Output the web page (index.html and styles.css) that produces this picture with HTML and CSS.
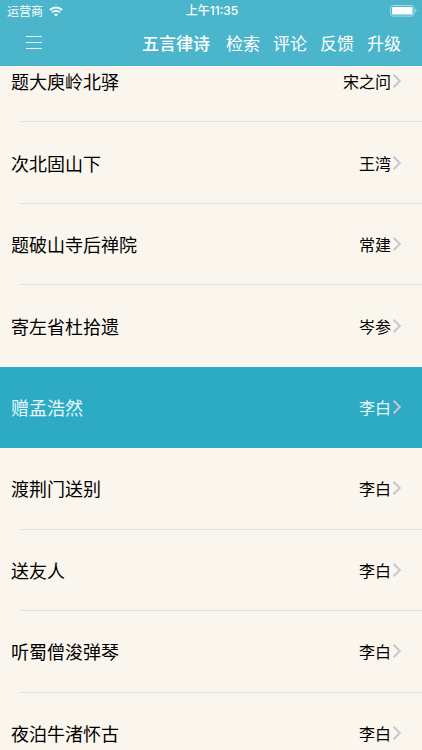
FILE: index.html
```html
<!DOCTYPE html>
<html lang="zh-CN">
<head>
  <meta charset="UTF-8">
  <meta name="viewport" content="width=device-width, initial-scale=1.0">
  <title>五言律诗</title>
  <link rel="stylesheet" href="styles.css">
</head>
<body>

<header class="header">
  <!-- Status bar -->
  <div class="status-bar">
    <div class="carrier">
      <span>运营商</span>
      <svg class="wifi" viewBox="0 0 14 11" width="14" height="11" aria-hidden="true">
        <path d="M0.9 4 A8.7 8.7 0 0 1 13.1 4" fill="none" stroke="#fff" stroke-width="2"/>
        <path d="M3.1 6.4 A5.6 5.6 0 0 1 10.9 6.4" fill="none" stroke="#fff" stroke-width="1.8"/>
        <path d="M7 10.6 L4.9 8.5 A3 3 0 0 1 9.1 8.5 Z" fill="#fff"/>
      </svg>
    </div>
    <span class="time">上午11:35</span>
    <svg class="battery" viewBox="0 0 27 12" width="27" height="12" aria-hidden="true">
      <rect x="0.5" y="0.5" width="23.5" height="10.6" rx="2.6" fill="none" stroke="#a9dce6"/>
      <rect x="2" y="2" width="20.5" height="7.6" rx="1.2" fill="#fff"/>
      <path d="M25.2 3.8 Q26.6 4.6 26.6 5.8 Q26.6 7 25.2 7.8 Z" fill="#a9dce6"/>
    </svg>
  </div>

  <!-- Navigation bar -->
  <nav class="nav-bar">
    <button class="menu-btn" type="button" aria-label="菜单">
      <svg viewBox="0 0 18 16" width="18" height="16" aria-hidden="true">
        <path d="M1 1.5 H17 M1 7.5 H17 M1 13.5 H17" stroke="#e6f6f8" stroke-width="1.2"/>
      </svg>
    </button>
    <h1 class="nav-title">五言律诗</h1>
    <div class="nav-links">
      <a href="#search">检索</a>
      <a href="#comment">评论</a>
      <a href="#feedback">反馈</a>
      <a href="#upgrade">升级</a>
    </div>
  </nav>
</header>

<!-- Shared list arrow -->
<svg class="symbols" width="0" height="0" aria-hidden="true">
  <symbol id="arrow" viewBox="0 0 10 16">
    <path d="M1.6 1.8 L7.8 8 L1.6 14.2" fill="none" stroke="currentColor" stroke-width="2"/>
  </symbol>
</svg>

<main class="content">
  <ul class="poem-list">
    <li><a class="poem" href="#poem1"><span class="title">题大庾岭北驿</span><span class="author">宋之问</span><svg class="arrow"><use href="#arrow"/></svg></a></li>
    <li><a class="poem" href="#poem2"><span class="title">次北固山下</span><span class="author">王湾</span><svg class="arrow"><use href="#arrow"/></svg></a></li>
    <li><a class="poem" href="#poem3"><span class="title">题破山寺后禅院</span><span class="author">常建</span><svg class="arrow"><use href="#arrow"/></svg></a></li>
    <li><a class="poem" href="#poem4"><span class="title">寄左省杜拾遗</span><span class="author">岑参</span><svg class="arrow"><use href="#arrow"/></svg></a></li>
    <li class="selected"><a class="poem" href="#poem5"><span class="title">赠孟浩然</span><span class="author">李白</span><svg class="arrow"><use href="#arrow"/></svg></a></li>
    <li><a class="poem" href="#poem6"><span class="title">渡荆门送别</span><span class="author">李白</span><svg class="arrow"><use href="#arrow"/></svg></a></li>
    <li><a class="poem" href="#poem7"><span class="title">送友人</span><span class="author">李白</span><svg class="arrow"><use href="#arrow"/></svg></a></li>
    <li><a class="poem" href="#poem8"><span class="title">听蜀僧浚弹琴</span><span class="author">李白</span><svg class="arrow"><use href="#arrow"/></svg></a></li>
    <li><a class="poem" href="#poem9"><span class="title">夜泊牛渚怀古</span><span class="author">李白</span><svg class="arrow"><use href="#arrow"/></svg></a></li>
  </ul>
</main>

</body>
</html>
```
FILE: styles.css
```css
* {
  box-sizing: border-box;
}

body {
  margin: 0;
  height: 100vh;
  display: flex;
  flex-direction: column;
  overflow: hidden;
  background: #faf5ed;
  color: #000;
  font-family: "Noto Sans CJK SC", sans-serif;
}

a {
  color: inherit;
  text-decoration: none;
}

.header {
  flex: none;
  background: #4bb6cb;
  color: #fff;
}

/* Status bar */
.status-bar {
  display: grid;
  grid-template-columns: 1fr auto 1fr;
  align-items: center;
  height: 22px;
  padding: 0 5px 0 7px;
  font-size: 12px;
  line-height: 22px;
}

.carrier {
  display: flex;
  align-items: center;
  gap: 6px;
}

.time {
  font-family: Inter, "Noto Sans CJK SC", sans-serif;
  font-size: 12px;
  font-weight: 500;
}

.battery {
  justify-self: end;
}

/* Navigation bar */
.nav-bar {
  display: flex;
  align-items: center;
  height: 44px;
  padding: 0 21px 2px 25px;
  font-size: 17px;
  line-height: 24px;
}

.menu-btn {
  display: flex;
  margin-right: auto;
  padding: 0;
  border: none;
  background: none;
  cursor: pointer;
}

.nav-title {
  margin: 0 16px 0 0;
  font-size: 17px;
  font-weight: 500;
}

.nav-links {
  display: flex;
  gap: 13px;
}

.symbols {
  position: absolute;
}

/* Poem list, scrolled so the first row is partly under the header */
.content {
  flex: 1;
  min-height: 0;
  overflow: hidden;
}

.poem-list {
  display: grid;
  grid-auto-rows: 1fr;
  min-height: 733px;
  margin: -25px 0 0;
  padding: 0;
  list-style: none;
}

.poem-list li {
  display: flex;
  flex-direction: column;
}

.poem {
  flex: 1;
  display: flex;
  align-items: center;
  padding: 0 20px 0 11px;
}

.poem-list li::after {
  content: "";
  height: 1px;
  margin-left: 20px;
  background: #e3dfd9;
}

.title {
  flex: 1;
  font-size: 18px;
}

.author {
  font-size: 16px;
}

.arrow {
  width: 10px;
  height: 16px;
  margin-left: 1px;
  color: #c7c7cc;
}

.poem-list .selected {
  background: #2dabc4;
  color: #e9f8fa;
}

.poem-list .selected::after,
.poem-list li:has(+ .selected)::after {
  background: none;
}
```
